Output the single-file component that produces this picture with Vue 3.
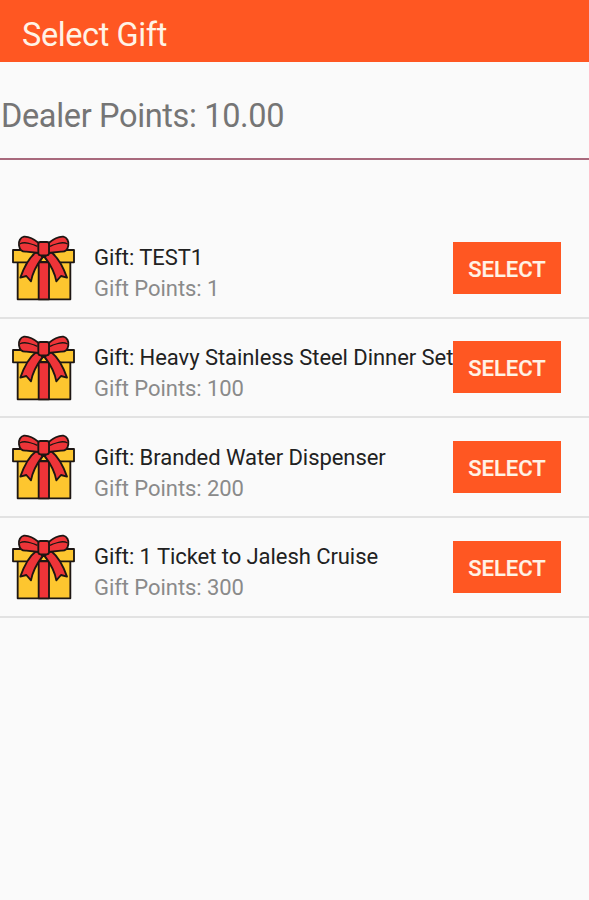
<template>
  <div class="gift-screen">
    <header class="app-bar">
      <h1 class="title">Select Gift</h1>
    </header>

    <div class="dealer-points">
      <span class="dealer-text">Dealer Points: {{ dealerPoints }}</span>
    </div>

    <ul class="gift-list">
      <li v-for="gift in gifts" :key="gift.name" class="gift-row">
        <svg class="gift-icon" viewBox="36 30 192 204">
          <g stroke="#1d1613" stroke-width="5.5" stroke-linejoin="round">
            <path fill="#fdc62f" d="M53 110H211V223H53Z" />
            <path fill="#fdc62f" d="M39 75H222V112H39Z" />
            <path fill="#ee3438" d="M116 112H147V223H116Z" />
            <path fill="#fdc62f" d="M118 111L131 92L145 111Z" />
            <path fill="#ee3438" d="M108 82C88 97 73 124 61 158L79 153L93 169C97 145 109 121 127 97L120 84Z" />
            <path fill="#ee3438" d="M154 82C173 97 189 124 201 158L183 153L169 169C165 145 153 121 135 97L142 84Z" />
            <path fill="#ee3438" d="M116 54C103 43 87 34 72 35C61 37 55 49 57 61C59 75 66 81 79 80L117 84Z" />
            <path fill="#ee3438" d="M146 54C159 43 175 34 190 35C201 37 207 49 205 61C203 75 196 81 183 80L145 84Z" />
            <path fill="none" stroke-width="4" d="M59 57C74 49 91 55 112 64M203 57C188 49 171 55 150 64" />
            <path fill="#ee3438" d="M121 51H141Q147 51 147 57V85Q147 91 140 91H122Q115 91 115 85V57Q115 51 121 51Z" />
          </g>
        </svg>
        <div class="gift-info">
          <div class="gift-name">Gift: {{ gift.name }}</div>
          <div class="gift-points">Gift Points: {{ gift.points }}</div>
        </div>
        <button class="select-button" @click="selectGift(gift)">SELECT</button>
      </li>
    </ul>
  </div>
</template>

<script setup>
import { ref } from 'vue'

const dealerPoints = ref('10.00')
const selectedGift = ref(null)

const gifts = ref([
  { name: 'TEST1', points: 1 },
  { name: 'Heavy Stainless Steel Dinner Set', points: 100 },
  { name: 'Branded Water Dispenser', points: 200 },
  { name: '1 Ticket to Jalesh Cruise', points: 300 }
])

const selectGift = (gift) => {
  selectedGift.value = gift
}
</script>

<style>
body {
  margin: 0;
  background-color: #fafafa;
}
</style>

<style scoped>
.gift-screen {
  min-height: 100vh;
  background-color: #fafafa;
  font-family: Roboto, "Liberation Sans", sans-serif;
  overflow: hidden;
}

.app-bar {
  height: 62px;
  box-sizing: border-box;
  padding: 15px 22px 0;
  background-color: #ff5722;
}

.title {
  margin: 0;
  font-size: 32.5px;
  line-height: 41px;
  letter-spacing: -0.4px;
  font-weight: 400;
  color: #fff3e6;
}

.dealer-points {
  height: 98px;
  box-sizing: border-box;
  padding: 34px 0 0 1px;
  border-bottom: 2px solid #a8697c;
}

.dealer-text {
  display: block;
  font-size: 32.5px;
  line-height: 41px;
  letter-spacing: -0.35px;
  color: #757575;
  white-space: nowrap;
}

.gift-list {
  margin: 59px 0 0;
  padding: 0;
  list-style: none;
}

.gift-row {
  display: flex;
  align-items: flex-start;
  height: 99.7px;
  box-sizing: border-box;
  padding: 16px 28px 0 12px;
  border-bottom: 2px solid #e2e2e2;
}

.gift-icon {
  flex: none;
  width: 64px;
  height: 68px;
}

.gift-info {
  flex: 1;
  min-width: 0;
  padding: 7.4px 0 0 18px;
  font-size: 22px;
  line-height: 31px;
  letter-spacing: -0.06px;
  white-space: nowrap;
}

.gift-name {
  color: #212121;
}

.gift-points {
  color: #8a8a8a;
}

.select-button {
  flex: none;
  width: 108px;
  height: 52px;
  margin-top: 6.6px;
  padding: 3px 0 0;
  border: none;
  background-color: #ff5722;
  color: #fff3e6;
  font-family: inherit;
  font-size: 22px;
  font-weight: 500;
  -webkit-text-stroke: 0.2px #fff3e6;
  cursor: pointer;
}
</style>
